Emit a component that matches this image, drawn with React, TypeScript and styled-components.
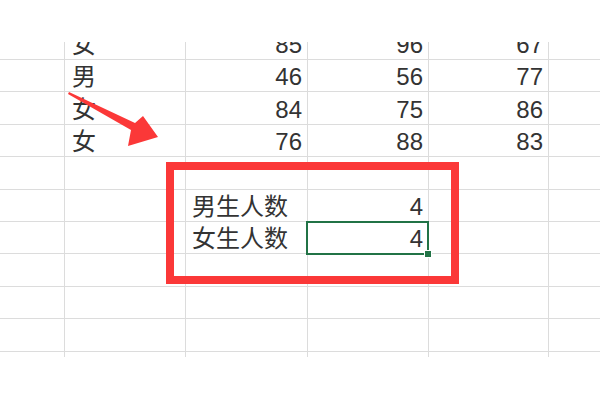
import React from "react";
import styled, { createGlobalStyle } from "styled-components";

const Global = createGlobalStyle`
  html, body { margin: 0; padding: 0; background: #ffffff; }
  body { width: 600px; height: 400px; overflow: hidden; }
`;

const Page = styled.div`
  position: relative;
  width: 600px;
  height: 400px;
  padding-top: 42px;
  box-sizing: border-box;
  background: #fff;
  font-family: "Liberation Sans", "Noto Sans CJK SC", sans-serif;
  color: #333;
`;

const Sheet = styled.div`
  height: 315px;
  overflow: hidden;
`;

const Rows = styled.div`
  margin-top: -14.4px;
`;

const Row = styled.div`
  display: grid;
  grid-template-columns: 65px 121px 122px 121px 120px 1fr;
  height: 32.4px;
  box-sizing: border-box;
  border-bottom: 1px solid #dcdcdc;
`;

const Cell = styled.div<{ $align?: "left" | "right"; $selected?: boolean }>`
  position: relative;
  display: flex;
  align-items: center;
  justify-content: ${(p) => (p.$align === "right" ? "flex-end" : "flex-start")};
  padding: 3px 5px 0 6px;
  box-sizing: border-box;
  border-right: 1px solid #dcdcdc;
  font-size: 24px;
  line-height: 28px;
  white-space: nowrap;
  ${(p) =>
    p.$selected &&
    `
    &::after {
      content: "";
      position: absolute;
      left: -2px;
      top: -1px;
      right: -1px;
      bottom: -2px;
      border: 2px solid #217346;
      z-index: 2;
    }
    &::before {
      content: "";
      position: absolute;
      right: -4px;
      bottom: -5px;
      width: 6px;
      height: 6px;
      background: #217346;
      border: 1px solid #fff;
      z-index: 3;
    }
  `}
`;

const LastCell = styled.div`
  border: none;
`;

const RedFrame = styled.div`
  position: absolute;
  left: 166px;
  top: 162px;
  width: 293px;
  height: 122px;
  box-sizing: border-box;
  border: 8.5px solid #fb3838;
  pointer-events: none;
`;

const Arrow = styled.svg`
  position: absolute;
  left: 0;
  top: 0;
  pointer-events: none;
`;

type RowData = { a?: string; b?: string; bLabel?: boolean; c?: string; d?: string; sel?: boolean };

const data: RowData[] = [
  { a: "女", b: "85", c: "96", d: "67" },
  { a: "男", b: "46", c: "56", d: "77" },
  { a: "女", b: "84", c: "75", d: "86" },
  { a: "女", b: "76", c: "88", d: "83" },
  {},
  { b: "男生人数", bLabel: true, c: "4" },
  { b: "女生人数", bLabel: true, c: "4", sel: true },
  {},
  {},
  {},
  {},
];

export default function App() {
  return (
    <>
      <Global />
      <Page>
        <Sheet>
          <Rows>
            {data.map((r, i) => (
              <Row key={i}>
                <Cell />
                <Cell $align="left" style={{ paddingLeft: 7 }}>{r.a}</Cell>
                <Cell $align={r.bLabel ? "left" : "right"}>{r.b}</Cell>
                <Cell $align="right" $selected={r.sel}>{r.c}</Cell>
                <Cell $align="right">{r.d}</Cell>
                <LastCell />
              </Row>
            ))}
          </Rows>
        </Sheet>
        <RedFrame />
        <Arrow width="600" height="400" viewBox="0 0 600 400">
          <polygon
            points="69,92 135,123 143,116 158,137 128,146 131,130 68,94"
            fill="#fb3838"
          />
        </Arrow>
      </Page>
    </>
  );
}
